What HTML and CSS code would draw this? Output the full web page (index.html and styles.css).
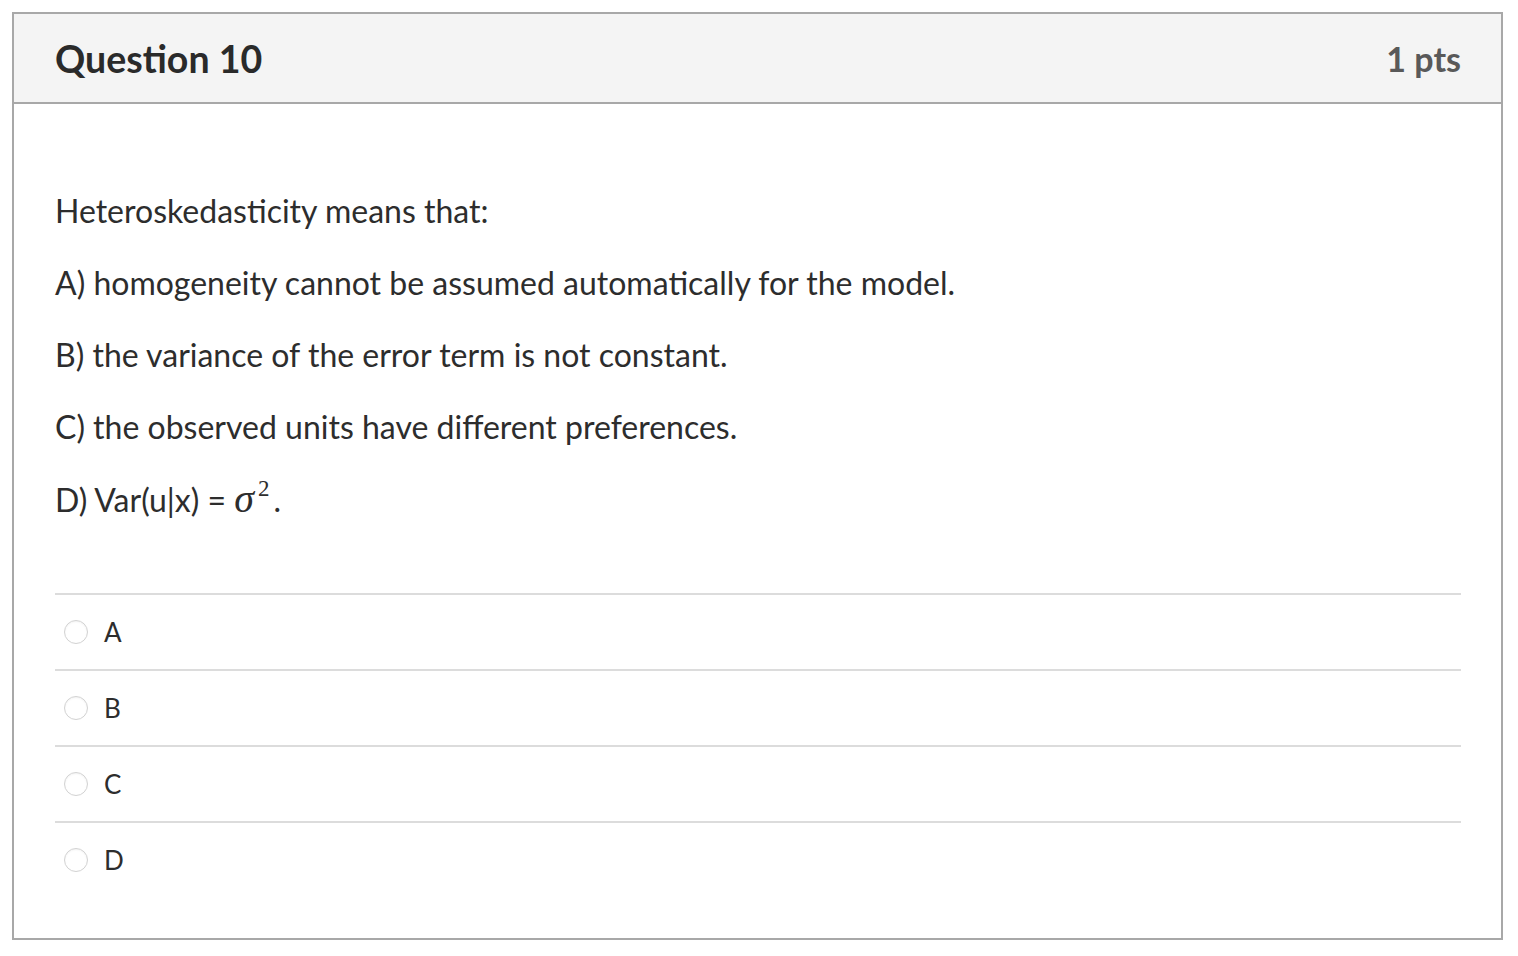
FILE: index.html
```html
<!DOCTYPE html>
<html>
<head>
<meta charset="utf-8">
<link rel="stylesheet" href="styles.css">
</head>
<body>
<div class="card">
  <div class="header">
    <h2 class="title">Question 10</h2>
    <span class="pts">1 pts</span>
  </div>
  <div class="body">
    <div class="text">
      <p>Heteroskedasticity means that:</p>
      <p>A) homogeneity cannot be assumed automatically for the model.</p>
      <p>B) the variance of the error term is not constant.</p>
      <p>C) the observed units have different preferences.</p>
      <p>D) Var(u|x) = <span class="math"><span class="sigma">σ</span><sup class="sq">2</sup></span>.</p>
    </div>
    <div class="answers">
      <label class="answer"><span class="radio"></span><span class="letter">A</span></label>
      <label class="answer"><span class="radio"></span><span class="letter">B</span></label>
      <label class="answer"><span class="radio"></span><span class="letter">C</span></label>
      <label class="answer"><span class="radio"></span><span class="letter">D</span></label>
    </div>
  </div>
</div>
</body>
</html>
```
FILE: styles.css
```css
html, body {
  margin: 0;
  padding: 0;
  background: #ffffff;
}
body {
  font-family: Lato, "Liberation Sans", sans-serif;
  color: #2d2d2d;
  padding: 12px 0 0 12px;
}
.card {
  width: 1491px;
  height: 928px;
  box-sizing: border-box;
  border: 2px solid #a8a8a8;
  display: flex;
  flex-direction: column;
}
.header {
  height: 88px;
  flex: none;
  background: #f4f4f4;
  border-bottom: 2px solid #a8a8a8;
  display: flex;
  align-items: center;
  justify-content: space-between;
  padding: 0 40px 0 41px;
}
.title {
  margin: 0;
  font-size: 37.5px;
  font-weight: 700;
  color: #2a2a2a;
}
.pts {
  font-size: 34px;
  font-weight: 700;
  color: #595959;
}
.body {
  padding: 71px 40px 0 41px;
}
.text p {
  margin: 0;
  font-size: 32px;
  line-height: 72px;
}
.math {
  font-family: "Liberation Serif", serif;
}
.sigma {
  font-style: italic;
  font-size: 40px;
  margin-right: 2px;
}
.sq {
  font-size: 23px;
  vertical-align: 16px;
  line-height: 0;
  margin-left: 2px;
  margin-right: 4px;
}
.answers {
  margin-top: 56px;
}
.answer {
  display: flex;
  align-items: center;
  height: 76px;
  border-top: 2px solid #dcdcdc;
  box-sizing: border-box;
}
.radio {
  width: 24px;
  height: 24px;
  border-radius: 50%;
  border: 1.5px solid #d2d2d2;
  box-sizing: border-box;
  margin-left: 9px;
  background: #fff;
  box-shadow: inset 0 1px 2px rgba(0,0,0,0.05);
}
.letter {
  margin-left: 16px;
  font-size: 26px;
  color: #2d2d2d;
}
```
